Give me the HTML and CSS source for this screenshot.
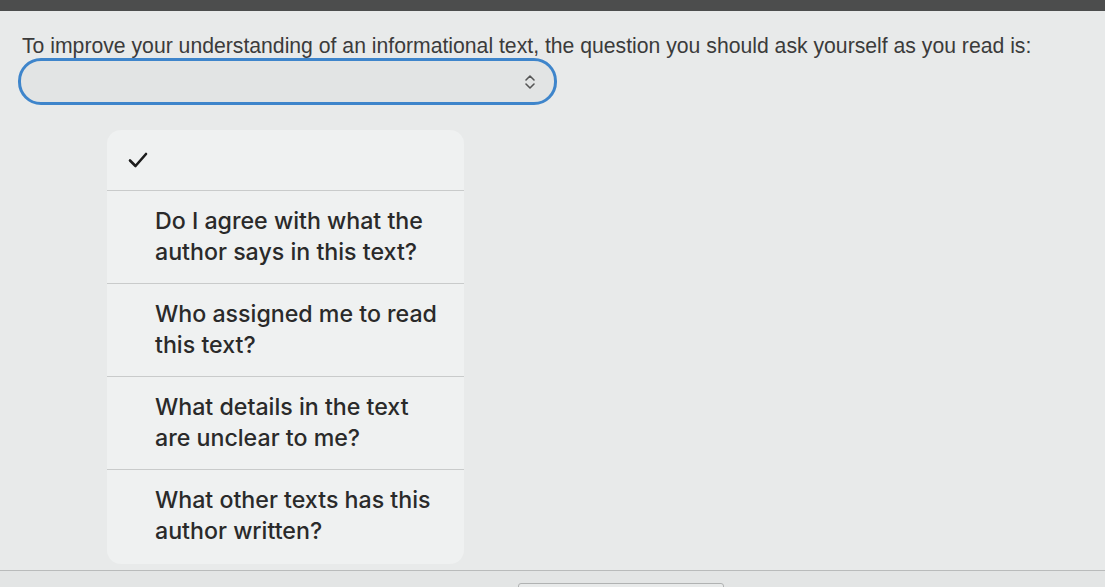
FILE: index.html
```html
<!DOCTYPE html>
<html lang="en">
<head>
<meta charset="utf-8">
<link rel="stylesheet" href="styles.css">
</head>
<body>
<div class="topbar"></div>
<main class="page">
  <p class="prompt">To improve your understanding of an informational text, the question you should ask yourself as you read is:</p>
  <div class="select">
    <svg class="chev" width="12" height="16" viewBox="0 0 12 16"><path d="M2 6 L6 2 L10 6 M2 10 L6 14 L10 10" fill="none" stroke="#555" stroke-width="1.6" stroke-linecap="round" stroke-linejoin="round"/></svg>
  </div>
  <ul class="menu">
    <li class="item check-row">
      <svg width="22" height="18" viewBox="0 0 22 18"><path d="M3 9.5 L8.5 15 L19 3" fill="none" stroke="#1c1c1c" stroke-width="2.6" stroke-linecap="round" stroke-linejoin="round"/></svg>
    </li>
    <li class="item">Do I agree with what the author says in this text?</li>
    <li class="item">Who assigned me to read this text?</li>
    <li class="item">What details in the text are unclear to me?</li>
    <li class="item">What other texts has this author written?</li>
  </ul>
</main>
<footer class="bottom">
  <div class="tab"></div>
</footer>
</body>
</html>
```
FILE: styles.css
```css
html, body {
  margin: 0;
  padding: 0;
  background: #e6e8e8;
  font-family: "Liberation Sans", Arial, sans-serif;
  color: #3a3a3a;
  overflow: hidden;
}
.topbar {
  height: 11px;
  background: #4c4d4d;
}
.page {
  height: 560px;
  padding: 0 0 0 22px;
  box-sizing: border-box;
  background: #e8eaea;
  border-bottom: 1px solid #b9bbbb;
}
.prompt {
  margin: 0;
  padding-top: 23px;
  font-size: 21.2px;
  line-height: 24px;
  color: #3b3b3b;
  white-space: nowrap;
}
.select {
  margin: 0 0 0 -4px;
  width: 539px;
  height: 47px;
  box-sizing: border-box;
  border: 3px solid #3e85cb;
  border-radius: 23px;
  background: #e2e4e4;
  display: flex;
  align-items: center;
  justify-content: flex-end;
  padding-right: 18px;
}
.chev { display: block; }
.menu {
  list-style: none;
  margin: 25px 0 0 85px;
  padding: 0;
  width: 357px;
  background: #eff1f1;
  border-radius: 14px;
  overflow: hidden;
}
.item {
  font-family: Inter, "Noto Sans", sans-serif;
  font-weight: 500;
  font-size: 23.2px;
  line-height: 31px;
  color: #2a2a2a;
  padding: 15px 22px 16px 48px;
  border-top: 1px solid #c9cbcb;
  height: 93px;
  box-sizing: border-box;
}
.item:last-child { height: 95px; }
.check-row {
  border-top: none;
  height: 60px;
  padding: 21px 0 0 20px;
}
.check-row svg { display: block; }
.bottom {
  height: 16px;
  background: #e3e5e5;
  position: relative;
}
.tab {
  position: absolute;
  left: 518px;
  top: 12px;
  width: 204px;
  height: 6px;
  border: 1px solid #b0b2b2;
  border-radius: 3px 3px 0 0;
  background: #e8eaea;
}
```
